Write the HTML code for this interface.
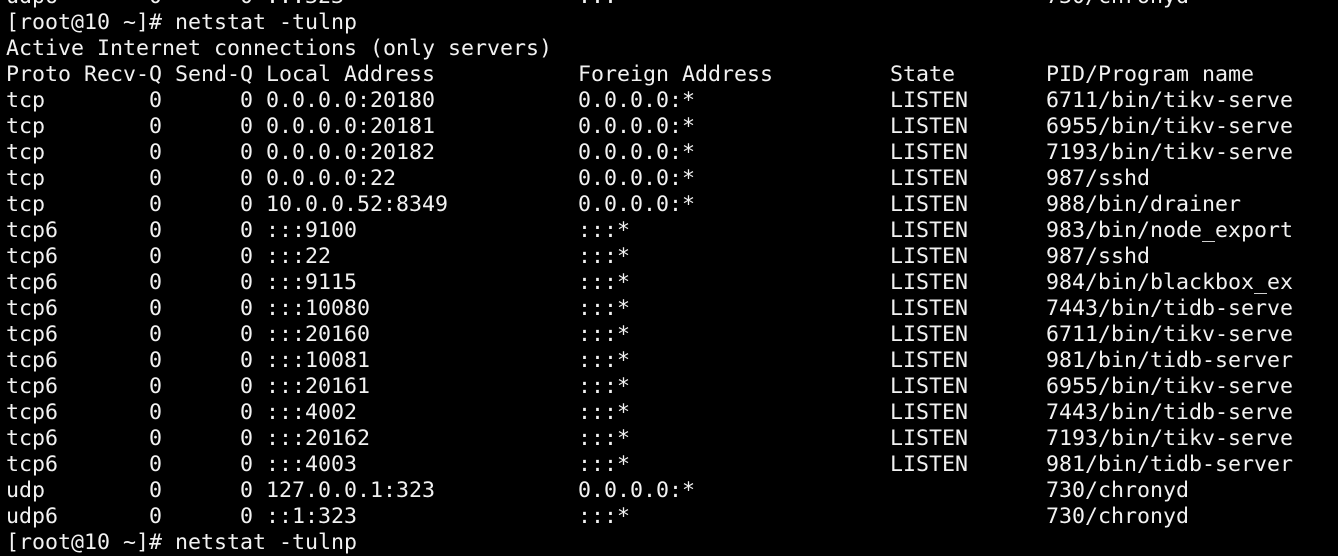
<!DOCTYPE html>
<html><head><meta charset="utf-8"><style>
html,body{margin:0;padding:0;background:#000;width:1338px;height:548px;overflow:hidden}
pre{position:absolute;left:6px;top:-16px;margin:0;font-family:"DejaVu Sans Mono","Liberation Mono",monospace;font-size:21.6px;line-height:26px;color:#f2f2f2;white-space:pre}
</style></head><body><pre>udp6       0      0 :::323                  :::*                                730/chronyd
[root@10 ~]# netstat -tulnp
Active Internet connections (only servers)
Proto Recv-Q Send-Q Local Address           Foreign Address         State       PID/Program name
tcp        0      0 0.0.0.0:20180           0.0.0.0:*               LISTEN      6711/bin/tikv-serve
tcp        0      0 0.0.0.0:20181           0.0.0.0:*               LISTEN      6955/bin/tikv-serve
tcp        0      0 0.0.0.0:20182           0.0.0.0:*               LISTEN      7193/bin/tikv-serve
tcp        0      0 0.0.0.0:22              0.0.0.0:*               LISTEN      987/sshd
tcp        0      0 10.0.0.52:8349          0.0.0.0:*               LISTEN      988/bin/drainer
tcp6       0      0 :::9100                 :::*                    LISTEN      983/bin/node_export
tcp6       0      0 :::22                   :::*                    LISTEN      987/sshd
tcp6       0      0 :::9115                 :::*                    LISTEN      984/bin/blackbox_ex
tcp6       0      0 :::10080                :::*                    LISTEN      7443/bin/tidb-serve
tcp6       0      0 :::20160                :::*                    LISTEN      6711/bin/tikv-serve
tcp6       0      0 :::10081                :::*                    LISTEN      981/bin/tidb-server
tcp6       0      0 :::20161                :::*                    LISTEN      6955/bin/tikv-serve
tcp6       0      0 :::4002                 :::*                    LISTEN      7443/bin/tidb-serve
tcp6       0      0 :::20162                :::*                    LISTEN      7193/bin/tikv-serve
tcp6       0      0 :::4003                 :::*                    LISTEN      981/bin/tidb-server
udp        0      0 127.0.0.1:323           0.0.0.0:*                           730/chronyd
udp6       0      0 ::1:323                 :::*                                730/chronyd
[root@10 ~]# netstat -tulnp</pre></body></html>
